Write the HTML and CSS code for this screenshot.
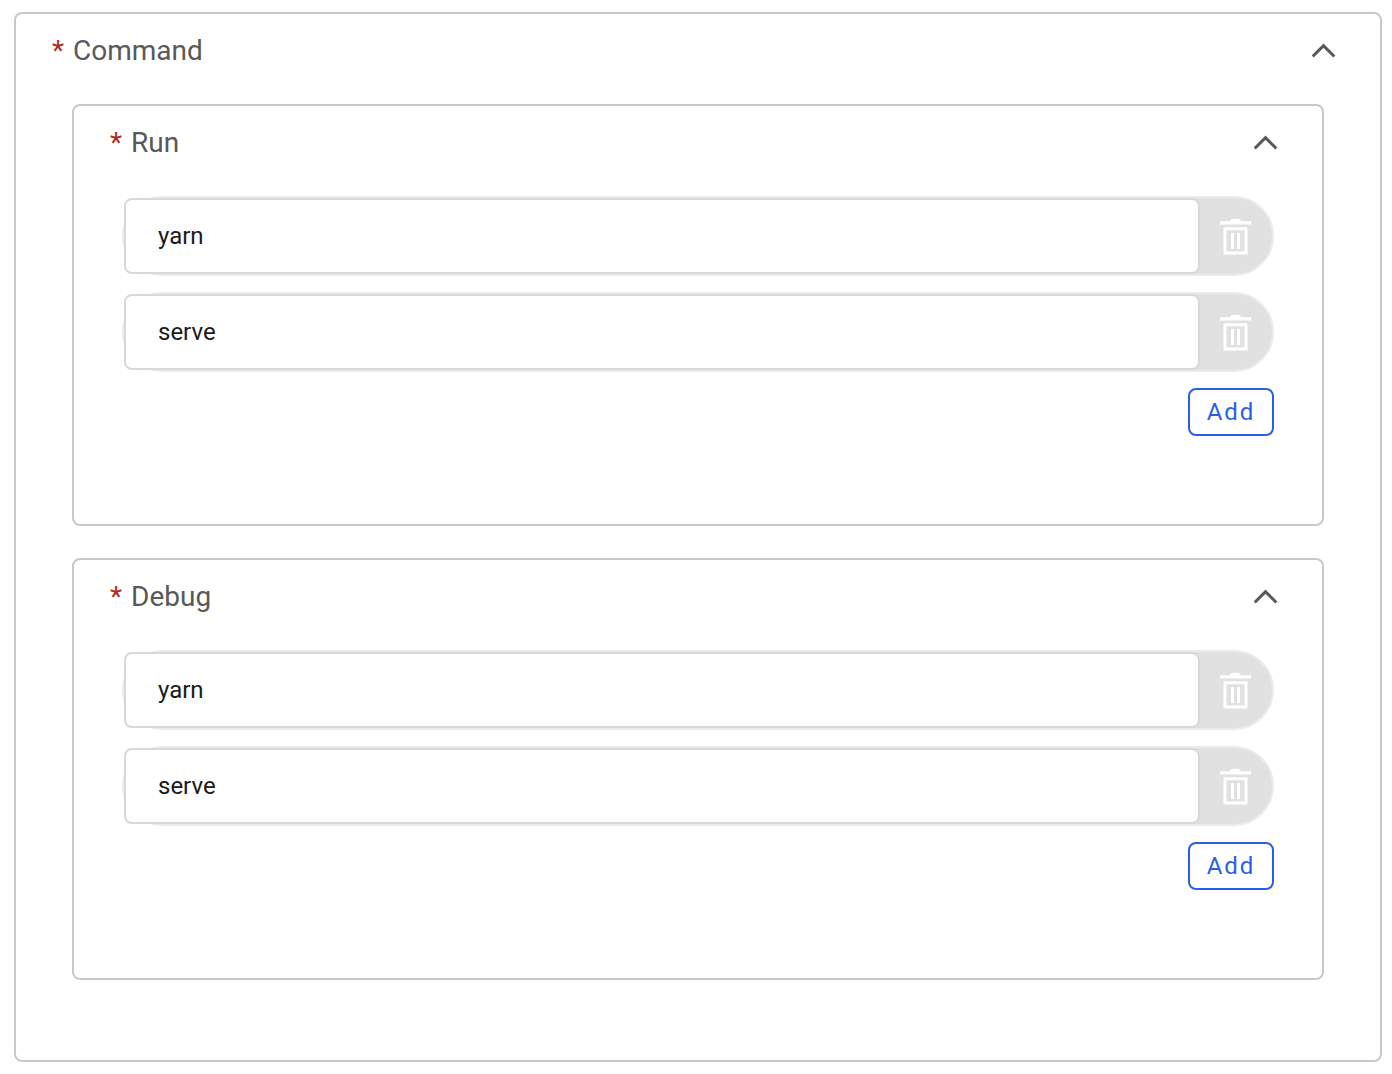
FILE: index.html
```html
<!DOCTYPE html>
<html lang="en">
<head>
<meta charset="utf-8">
<title>Command</title>
<link rel="stylesheet" href="styles.css">
</head>
<body>
<svg class="sprite" aria-hidden="true">
  <symbol id="chevron" viewBox="0 0 24 16"><path d="M.7 13.500 11.500 2.700 22.300 13.500" fill="none" stroke="#595959" stroke-width="3"/></symbol>
  <symbol id="trash" viewBox="0 0 32 38">
    <path d="M0 4.200H9.800Q11 1.700 13 1.700H18Q20 1.700 21.200 4.200H31.200V7.500H0Z" fill="#fff"/>
    <path d="M5 11.700H26V36H5Z" fill="none" stroke="#fff" stroke-width="3"/>
    <path d="M11 16H14V32H11ZM17 16H20V32H17Z" fill="#fff"/>
  </symbol>
</svg>
<form class="panel panel-root">
  <header class="panel-header">
    <h1 class="title"><span class="required">*</span> Command</h1>
    <button type="button" class="toggle" aria-expanded="true" aria-label="Collapse Command"><svg class="chevron"><use href="#chevron"/></svg></button>
  </header>
  <div class="groups">
    <section class="panel">
      <header class="panel-header">
        <h2 class="title"><span class="required">*</span> Run</h2>
        <button type="button" class="toggle" aria-expanded="true" aria-label="Collapse Run"><svg class="chevron"><use href="#chevron"/></svg></button>
      </header>
      <div class="items">
        <div class="item">
          <input class="field" type="text" value="yarn" aria-label="Run argument 1">
          <button type="button" class="delete" aria-label="Delete"><svg class="trash"><use href="#trash"/></svg></button>
        </div>
        <div class="item">
          <input class="field" type="text" value="serve" aria-label="Run argument 2">
          <button type="button" class="delete" aria-label="Delete"><svg class="trash"><use href="#trash"/></svg></button>
        </div>
        <button type="button" class="add">Add</button>
      </div>
    </section>
    <section class="panel">
      <header class="panel-header">
        <h2 class="title"><span class="required">*</span> Debug</h2>
        <button type="button" class="toggle" aria-expanded="true" aria-label="Collapse Debug"><svg class="chevron"><use href="#chevron"/></svg></button>
      </header>
      <div class="items">
        <div class="item">
          <input class="field" type="text" value="yarn" aria-label="Debug argument 1">
          <button type="button" class="delete" aria-label="Delete"><svg class="trash"><use href="#trash"/></svg></button>
        </div>
        <div class="item">
          <input class="field" type="text" value="serve" aria-label="Debug argument 2">
          <button type="button" class="delete" aria-label="Delete"><svg class="trash"><use href="#trash"/></svg></button>
        </div>
        <button type="button" class="add">Add</button>
      </div>
    </section>
  </div>
</form>
</body>
</html>
```
FILE: styles.css
```css
*, *::before, *::after { box-sizing: border-box; }

body {
  margin: 0;
  padding: 12px 10px 12px 14px;
  background: #fff;
  color: #595959;
  font-family: Roboto, sans-serif;
}

.sprite { display: none; }

.panel {
  border: 2px solid #c9c9c9;
  border-radius: 8px;
  padding-bottom: 88px;
}

.panel-root { padding-bottom: 80px; }

.panel-header {
  display: flex;
  align-items: center;
  justify-content: space-between;
  height: 74px;
  padding: 0 44px 0 36px;
}

.title {
  margin: 0;
  font-size: 28px;
  line-height: 36px;
  font-weight: 400;
}

.required {
  margin-right: 2px;
  color: #b02a24;
}

.toggle,
.delete {
  display: flex;
  align-items: center;
  justify-content: center;
  border: 0;
  padding: 0;
  background: none;
}

.chevron { width: 24px; height: 16px; }

.groups {
  display: flex;
  flex-direction: column;
  gap: 32px;
  padding: 16px 56px 0;
}

.items {
  display: flex;
  flex-direction: column;
  gap: 16px;
  padding: 16px 48px 0;
}

.item {
  display: flex;
  height: 80px;
  border: 2px solid #ebebeb;
  border-radius: 40px;
  background: #e1e1e1;
}

.field {
  flex: 1;
  min-width: 0;
  border: 2px solid #d8d8d8;
  border-radius: 8px;
  padding: 0 32px;
  background: #fff;
  color: #1a1a1a;
  font: 400 24px/32px Roboto, sans-serif;
}

.delete { width: 72px; }

.trash { width: 32px; height: 38px; }

.add {
  align-self: flex-end;
  min-width: 86px;
  height: 48px;
  border: 2px solid #2a5ee8;
  border-radius: 8px;
  padding: 0 16px;
  background: #fff;
  color: #2a5ee8;
  font: 400 24px/32px Roboto, sans-serif;
  letter-spacing: 2px;
}
```
